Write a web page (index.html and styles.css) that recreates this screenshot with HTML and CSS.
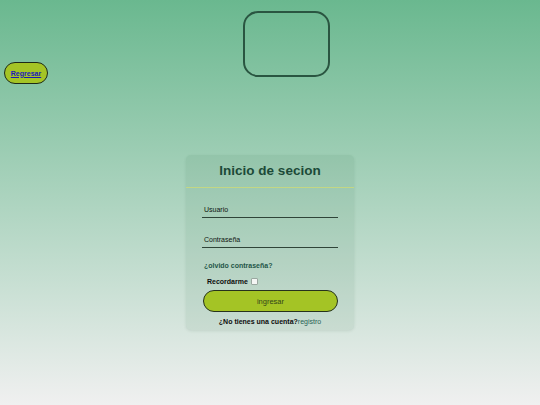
FILE: index.html
```html
<!DOCTYPE html>
<html lang="es">
<head>
<meta charset="utf-8">
<title>Inicio de secion</title>
<link rel="stylesheet" href="styles.css">
</head>
<body>
<header class="top">
  <a class="back" href="#">Regresar</a>
  <div class="logo"></div>
</header>
<main class="card">
  <h1 class="card-title">Inicio de secion</h1>
  <form class="form">
    <label class="field"><span class="field-label">Usuario</span></label>
    <label class="field"><span class="field-label">Contraseña</span></label>
    <a class="forgot" href="#">¿olvido contraseña?</a>
    <label class="remember">Recordarme <span class="check"></span></label>
    <button class="submit" type="button">ingresar</button>
    <p class="signup">¿No tienes una cuenta?<a class="signup-link" href="#">registro</a></p>
  </form>
</main>
</body>
</html>
```
FILE: styles.css
```css
html, body {
  margin: 0;
  padding: 0;
}
body {
  min-height: 405px;
  background: linear-gradient(to bottom, #6ab88f 0%, #f0f0f0 100%);
  font-family: "Liberation Sans", Arial, sans-serif;
  overflow: hidden;
}
.top {
  display: flex;
  align-items: flex-start;
  padding-left: 4px;
}
.back {
  margin-top: 62px;
  box-sizing: border-box;
  width: 44px;
  height: 22px;
  display: flex;
  align-items: center;
  justify-content: center;
  background: #a4c425;
  border: 1px solid #1e2a18;
  border-radius: 11px;
  color: #1a1ab8;
  font-weight: bold;
  font-size: 7px;
  text-decoration: underline;
}
.logo {
  margin-left: 195px;
  margin-top: 11px;
  box-sizing: border-box;
  width: 87px;
  height: 66px;
  border: 2px solid #2a5541;
  border-radius: 15px;
}
.card {
  box-sizing: border-box;
  width: 168px;
  height: 175px;
  margin: 71px auto 0;
  background: rgba(40, 100, 70, 0.08);
  border-radius: 5px;
  box-shadow: 0 1px 3px rgba(40, 80, 60, 0.12);
}
.card-title {
  margin: 0;
  height: 33px;
  box-sizing: border-box;
  padding-top: 8px;
  text-align: center;
  font-size: 13.5px;
  font-weight: bold;
  color: #1c4a38;
  border-bottom: 1px solid #c3d784;
}
.form {
  display: flex;
  flex-direction: column;
  padding: 0 16px;
}
.field {
  display: block;
  height: 30px;
  box-sizing: border-box;
  border-bottom: 1.5px solid #2f4438;
  padding-top: 18px;
  font-size: 7px;
  color: #0e1410;
}
.field-label {
  padding-left: 2px;
}
.forgot {
  margin-top: 14px;
  padding-left: 2px;
  font-size: 7px;
  font-weight: bold;
  color: #245648;
  text-decoration: none;
}
.remember {
  margin-top: 9px;
  padding-left: 5px;
  display: flex;
  align-items: center;
  gap: 3px;
  font-size: 7px;
  font-weight: bold;
  color: #0c0c0c;
}
.check {
  width: 5px;
  height: 5px;
  background: #f4f6f4;
  border: 0.5px solid #9aa8a0;
  border-radius: 1px;
}
.submit {
  margin-top: 5px;
  margin-left: 1px;
  box-sizing: border-box;
  width: 135px;
  height: 22px;
  background: #a4c425;
  border: 1px solid #26321c;
  border-radius: 11px;
  font-family: "Liberation Sans", Arial, sans-serif;
  font-size: 7.5px;
  color: #34461a;
  padding: 0;
}
.signup {
  margin: 6px 0 0;
  text-align: center;
  font-size: 7px;
  font-weight: bold;
  color: #0c0c0c;
}
.signup-link {
  color: #266456;
  font-weight: normal;
  text-decoration: none;
}
```
